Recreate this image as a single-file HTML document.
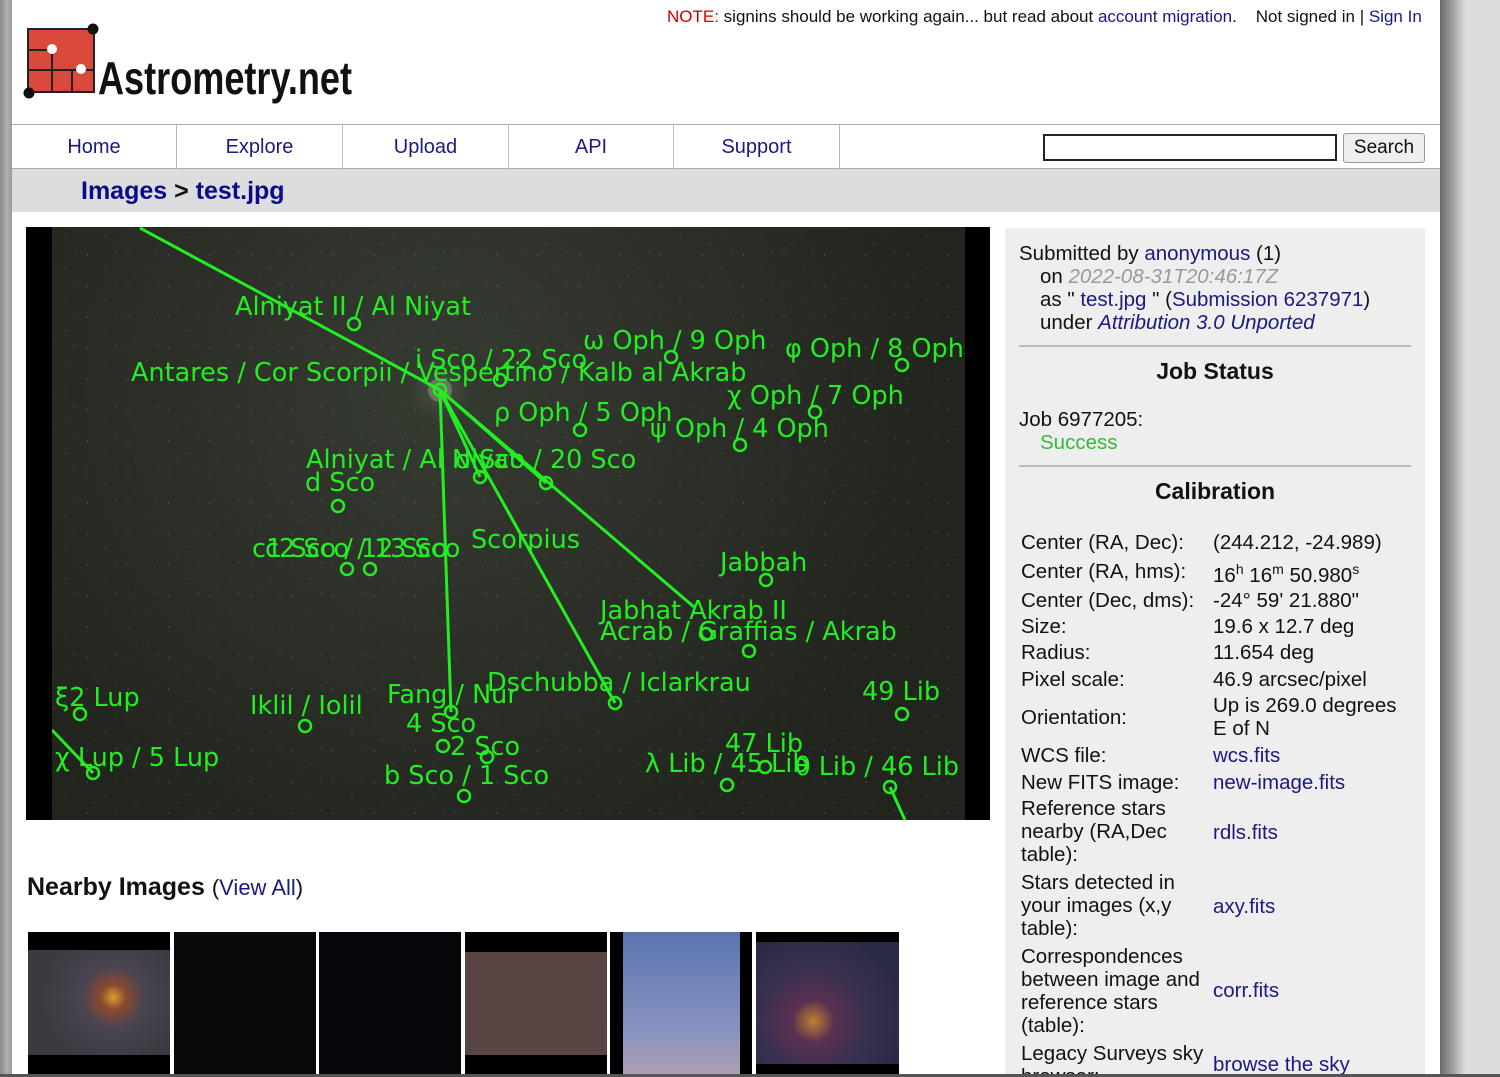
<!DOCTYPE html>
<html><head><meta charset="utf-8"><style>
*{margin:0;padding:0;box-sizing:border-box}
html,body{width:1500px;height:1077px;overflow:hidden}
body{background:#ddd;font-family:"Liberation Sans",Arial,sans-serif;position:relative;color:#111}
a{color:#1a1a80;text-decoration:none}
.abs{position:absolute;white-space:nowrap}
#lg{position:absolute;left:0;top:0;width:12px;height:1077px;background:linear-gradient(90deg,#8a8a8a,#b0b0b0 60%,#999)}
#rg{position:absolute;left:1440px;top:0;width:25px;height:1077px;background:linear-gradient(90deg,#6a6a6a,#aaa 60%,#ddd)}
#page{position:absolute;left:12px;top:0;width:1428px;height:1077px;background:#fff}
.nav{position:absolute;top:125px;height:44px;border-right:1px solid #bbb;font-size:20px;color:#1a1a80;text-align:center;line-height:44px}
.r{position:absolute;font-size:20.5px;line-height:23px;white-space:nowrap}
</style></head><body>
<div id="lg"></div><div id="rg"></div>
<div id="page"></div>
<div class="abs" style="left:667px;top:7px;font-size:17px"><span style="color:#c00">NOTE:</span> signins should be working again... but read about <a>account migration</a>.&nbsp;&nbsp;&nbsp; Not signed in | <a>Sign In</a></div>
<svg class="abs" style="left:20px;top:20px" width="340" height="90" viewBox="0 0 340 90">
<rect x="8" y="9" width="66" height="63" fill="#d94a3d" stroke="#222" stroke-width="2"/>
<path d="M8 30H34M8 50H74M32 30V72M52 50V72M32 29V50" stroke="#222" stroke-width="2" fill="none"/>
<circle cx="32" cy="29" r="5" fill="#fff"/><circle cx="61" cy="49" r="5" fill="#fff"/>
<circle cx="73" cy="9" r="5.5" fill="#111"/><circle cx="9" cy="73" r="5.5" fill="#111"/>
<text x="78" y="74" font-family="Liberation Sans Narrow,Liberation Sans,sans-serif" font-weight="bold" font-size="46" fill="#111" textLength="254" lengthAdjust="spacingAndGlyphs">Astrometry.net</text>
</svg>
<div class="abs" style="left:12px;top:124px;width:1428px;height:1px;background:#aaa"></div>
<div class="abs" style="left:12px;top:168px;width:1428px;height:1px;background:#aaa"></div>
<div class="nav" style="left:12px;width:165px">Home</div>
<div class="nav" style="left:177px;width:166px">Explore</div>
<div class="nav" style="left:343px;width:166px">Upload</div>
<div class="nav" style="left:509px;width:165px">API</div>
<div class="nav" style="left:674px;width:166px">Support</div>
<div class="abs" style="left:1043px;top:134px;width:294px;height:27px;border:2px solid #222;background:#fff"></div>
<div class="abs" style="left:1343px;top:133px;width:82px;height:30px;border:1px solid #999;border-radius:3px;background:#efefef;font-size:19px;text-align:center;line-height:28px">Search</div>
<div class="abs" style="left:12px;top:169px;width:1428px;height:43px;background:#ddd"></div>
<div class="abs" style="left:81px;top:177px;font-size:25px;font-weight:bold;color:#0a0a8a">Images <span style="color:#111">&gt;</span> test.jpg</div>
<div class="abs" style="left:26px;top:227px;width:964px;height:593px;background:#000"></div>
<svg class="abs" style="left:52px;top:227px" width="913" height="593" viewBox="52 227 913 593">
<defs><radialGradient id="g" cx="440" cy="390" r="520" gradientUnits="userSpaceOnUse"><stop offset="0" stop-color="#4a5044"/><stop offset="0.06" stop-color="#353a31"/><stop offset="1" stop-color="#22241e"/></radialGradient>
<pattern id="st" width="41" height="31" patternUnits="userSpaceOnUse"><circle cx="5" cy="7" r=".6" fill="#888"/><circle cx="24" cy="20" r=".5" fill="#777"/><circle cx="34" cy="4" r=".5" fill="#999"/><circle cx="13" cy="27" r=".5" fill="#666"/></pattern></defs>
<rect x="52" y="227" width="913" height="593" fill="url(#g)"/>
<rect x="52" y="227" width="913" height="593" fill="url(#st)" opacity=".7"/>
<circle cx="440" cy="390" r="12" fill="#cfd6b0" opacity=".3"/>
<g stroke="#2e2" stroke-width="3" fill="none">
<path d="M140 228L440 390M440 390L451 712M440 390L615 703M440 390L694 607M440 390L480 477M440 390L546 483M52 730L93 773M890 787L905 820"/>
<g stroke-width="2.5">
<circle cx="440" cy="390" r="6"/><circle cx="354" cy="324" r="6"/><circle cx="500" cy="380" r="6"/><circle cx="671" cy="357" r="6"/><circle cx="902" cy="365" r="6"/><circle cx="580" cy="430" r="6"/><circle cx="815" cy="412" r="6"/><circle cx="740" cy="445" r="6"/><circle cx="480" cy="477" r="6"/><circle cx="546" cy="483" r="6"/><circle cx="338" cy="506" r="6"/><circle cx="347" cy="569" r="6"/><circle cx="370" cy="569" r="6"/><circle cx="766" cy="580" r="6"/><circle cx="706" cy="634" r="6"/><circle cx="749" cy="651" r="6"/><circle cx="80" cy="714" r="6"/><circle cx="305" cy="726" r="6"/><circle cx="451" cy="712" r="6"/><circle cx="615" cy="703" r="6"/><circle cx="902" cy="714" r="6"/><circle cx="443" cy="746" r="6"/><circle cx="487" cy="757" r="6"/><circle cx="93" cy="773" r="6"/><circle cx="464" cy="796" r="6"/><circle cx="727" cy="785" r="6"/><circle cx="765" cy="767" r="6"/><circle cx="890" cy="787" r="6"/></g></g>
<g fill="#2e2" font-family="DejaVu Sans,sans-serif" font-size="25.5">
<text x="235" y="315">Alniyat II / Al Niyat</text>
<text x="131" y="381">Antares / Cor Scorpii / Vespertino / Kalb al Akrab</text>
<text x="415" y="368">i Sco / 22 Sco</text>
<text x="583" y="349">ω Oph / 9 Oph</text>
<text x="785" y="357">φ Oph / 8 Oph</text>
<text x="494" y="421">ρ Oph / 5 Oph</text>
<text x="727" y="404">χ Oph / 7 Oph</text>
<text x="650" y="437">ψ Oph / 4 Oph</text>
<text x="306" y="468">Alniyat / Al Niyat</text>
<text x="455" y="468">σ Sco / 20 Sco</text>
<text x="305" y="491">d Sco</text>
<text x="252" y="557">c1 Sco / 12 Sco</text>
<text x="265" y="557">c2 Sco / 13 Sco</text>
<text x="471" y="548">Scorpius</text>
<text x="720" y="571">Jabbah</text>
<text x="600" y="619">Jabhat Akrab II</text>
<text x="600" y="640">Acrab / Graffias / Akrab</text>
<text x="55" y="706">ξ2 Lup</text>
<text x="250" y="714">Iklil / Iolil</text>
<text x="387" y="703">Fang / Nur</text>
<text x="487" y="691">Dschubba / Iclarkrau</text>
<text x="862" y="700">49 Lib</text>
<text x="406" y="732">4 Sco</text>
<text x="450" y="755">2 Sco</text>
<text x="55" y="766">χ Lup / 5 Lup</text>
<text x="384" y="784">b Sco / 1 Sco</text>
<text x="725" y="752">47 Lib</text>
<text x="645" y="772">λ Lib / 45 Lib</text>
<text x="795" y="775">θ Lib / 46 Lib</text>
</g></svg>
<div class="abs" style="left:27px;top:873px;font-size:25px;font-weight:bold">Nearby Images <span style="font-weight:normal;font-size:22px">(<a>View All</a>)</span></div>
<div class="abs" style="left:28px;top:932px;width:142px;height:145px;background:#000"><div style="position:absolute;top:18px;width:142px;height:105px;background:radial-gradient(circle at 60% 45%,#d9a030 0,#8a4a30 12%,#4a4450 30%,#3a3a40 70%)"></div></div>
<div class="abs" style="left:174px;top:932px;width:142px;height:145px;background:#0a0a0c"></div>
<div class="abs" style="left:319px;top:932px;width:142px;height:145px;background:#06070a"></div>
<div class="abs" style="left:465px;top:932px;width:142px;height:145px;background:#000"><div style="position:absolute;top:20px;width:142px;height:103px;background:#5a4545"></div></div>
<div class="abs" style="left:610px;top:932px;width:142px;height:145px;background:#000"><div style="position:absolute;left:13px;width:117px;height:145px;background:linear-gradient(#5a74b0,#8a94c0 70%,#b0a0b0)"></div></div>
<div class="abs" style="left:756px;top:932px;width:143px;height:145px;background:#000"><div style="position:absolute;top:10px;width:143px;height:122px;background:radial-gradient(circle at 40% 65%,#c08030 0,#5a3050 18%,#3a3050 45%,#2a2a45 80%)"></div></div>
<div class="abs" style="left:1005px;top:228px;width:420px;height:849px;background:#eee"></div>
<div class="r" style="left:1019px;top:242px">Submitted by <a>anonymous</a> (1)</div>
<div class="r" style="left:1040px;top:265px">on <i style="color:#999">2022-08-31T20:46:17Z</i></div>
<div class="r" style="left:1040px;top:288px">as " <a>test.jpg</a> " (<a>Submission 6237971</a>)</div>
<div class="r" style="left:1040px;top:311px">under <i><a>Attribution 3.0 Unported</a></i></div>
<div class="abs" style="left:1019px;top:345px;width:392px;height:2px;background:#bbb"></div>
<div class="r" style="left:1005px;width:420px;text-align:center;top:358px;font-weight:bold;font-size:23px;line-height:26px">Job Status</div>
<div class="r" style="left:1019px;top:408px">Job 6977205:</div>
<div class="r" style="left:1040px;top:431px;color:#3b3">Success</div>
<div class="abs" style="left:1019px;top:465px;width:392px;height:2px;background:#bbb"></div>
<div class="r" style="left:1005px;width:420px;text-align:center;top:478px;font-weight:bold;font-size:23px;line-height:26px">Calibration</div>
<div class="r" style="left:1021px;top:531px">Center (RA, Dec):</div><div class="r" style="left:1213px;top:531px">(244.212, -24.989)</div>
<div class="r" style="left:1021px;top:560px">Center (RA, hms):</div><div class="r" style="left:1213px;top:558px">16<sup style="font-size:14px">h</sup> 16<sup style="font-size:14px">m</sup> 50.980<sup style="font-size:14px">s</sup></div>
<div class="r" style="left:1021px;top:589px">Center (Dec, dms):</div><div class="r" style="left:1213px;top:589px">-24° 59' 21.880"</div>
<div class="r" style="left:1021px;top:615px">Size:</div><div class="r" style="left:1213px;top:615px">19.6 x 12.7 deg</div>
<div class="r" style="left:1021px;top:641px">Radius:</div><div class="r" style="left:1213px;top:641px">11.654 deg</div>
<div class="r" style="left:1021px;top:668px">Pixel scale:</div><div class="r" style="left:1213px;top:668px">46.9 arcsec/pixel</div>
<div class="r" style="left:1021px;top:706px">Orientation:</div><div class="r" style="left:1213px;top:694px">Up is 269.0 degrees<br>E of N</div>
<div class="r" style="left:1021px;top:744px">WCS file:</div><div class="r" style="left:1213px;top:744px"><a>wcs.fits</a></div>
<div class="r" style="left:1021px;top:771px">New FITS image:</div><div class="r" style="left:1213px;top:771px"><a>new-image.fits</a></div>
<div class="r" style="left:1021px;top:797px">Reference stars<br>nearby (RA,Dec<br>table):</div><div class="r" style="left:1213px;top:821px"><a>rdls.fits</a></div>
<div class="r" style="left:1021px;top:871px">Stars detected in<br>your images (x,y<br>table):</div><div class="r" style="left:1213px;top:895px"><a>axy.fits</a></div>
<div class="r" style="left:1021px;top:945px">Correspondences<br>between image and<br>reference stars<br>(table):</div><div class="r" style="left:1213px;top:979px"><a>corr.fits</a></div>
<div class="r" style="left:1021px;top:1042px">Legacy Surveys sky<br>browser:</div><div class="r" style="left:1213px;top:1053px"><a>browse the sky</a></div>
<div class="abs" style="left:0;top:1074px;width:1500px;height:3px;background:#555"></div>
</body></html>
